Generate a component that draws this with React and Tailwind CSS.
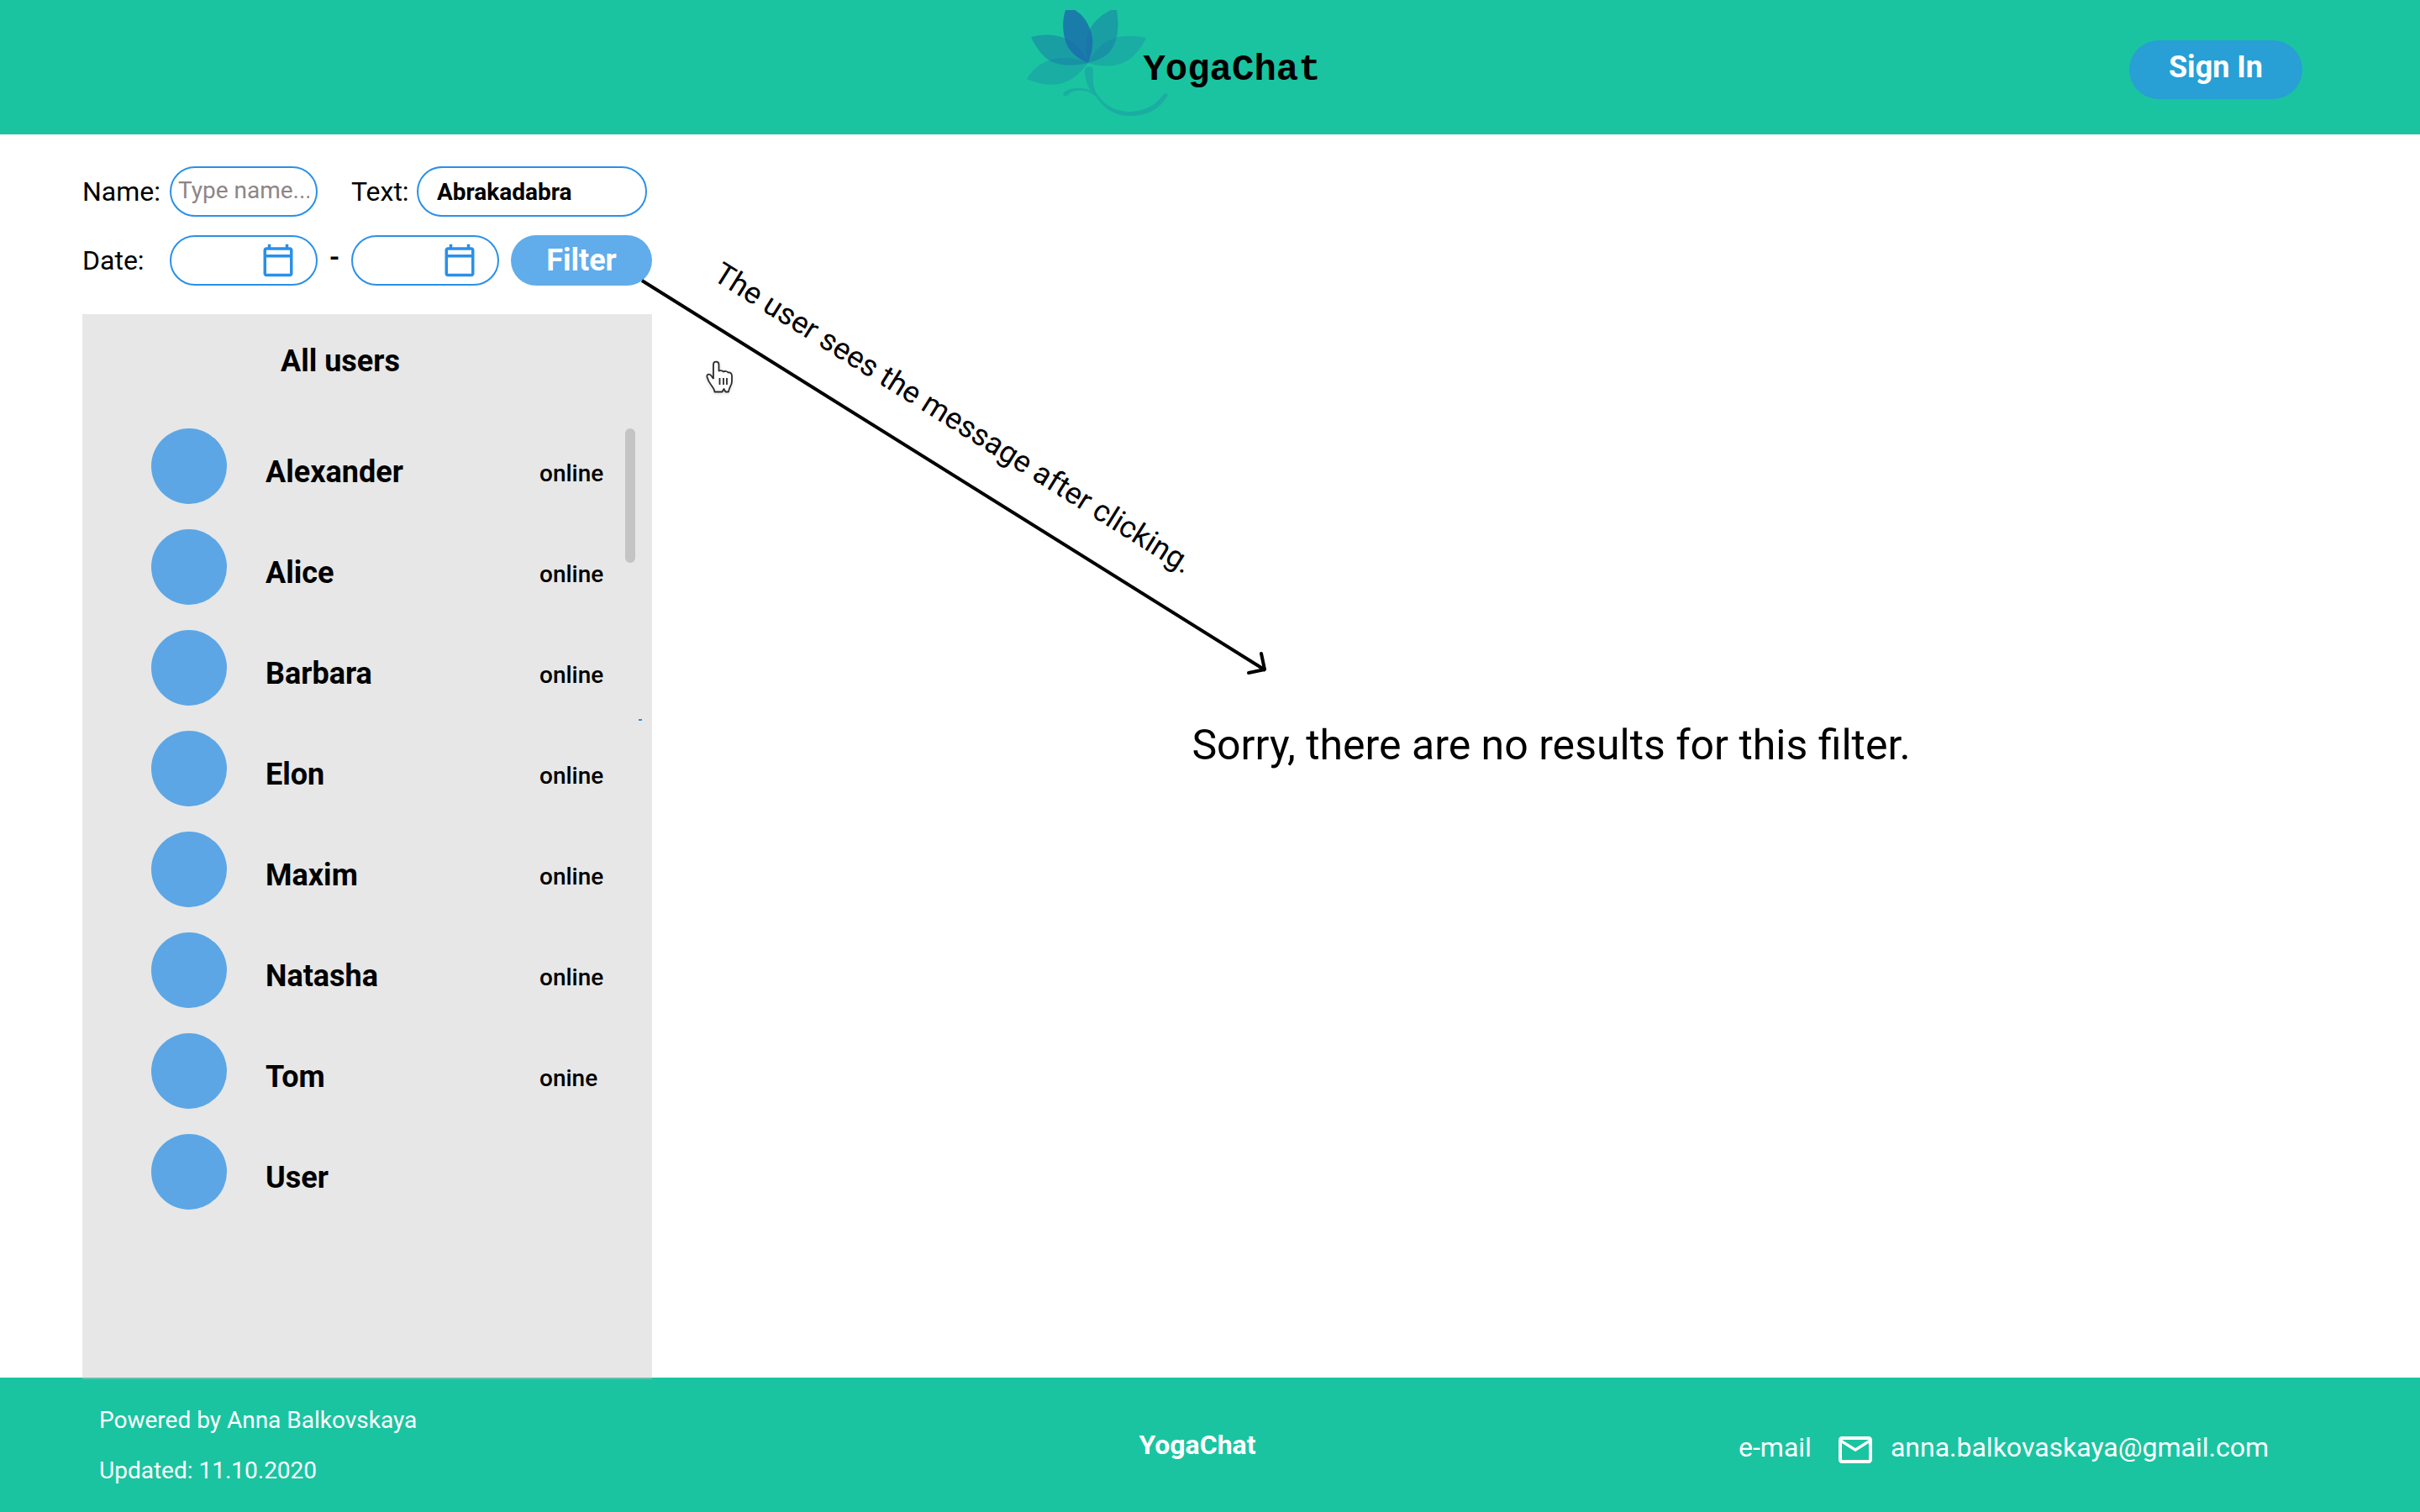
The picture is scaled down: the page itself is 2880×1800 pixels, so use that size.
const users = [
  { name: "Alexander", status: "online" },
  { name: "Alice", status: "online" },
  { name: "Barbara", status: "online" },
  { name: "Elon", status: "online" },
  { name: "Maxim", status: "online" },
  { name: "Natasha", status: "online" },
  { name: "Tom", status: "onine" },
  { name: "User", status: "" },
];

function LotusLogo() {
  return (
    <svg width="170" height="142" viewBox="0 0 170 142" aria-hidden="true">
      <g fill="#1878a8">
        <path fillOpacity="0.3" d="M73 63C50 53 17 53 0 82C14 88 26 90 38 88C54 85 64 74 73 63Z" />
        <path fillOpacity="0.3" d="M73 63C84 40 105 25 142 33C133 52 119 64 103 66C92 67 82 66 73 63Z" />
        <path fillOpacity="0.5" d="M73 63C66 44 45 22 5 32C12 47 21 58 31 62C44 67 60 66 73 63Z" />
        <path fillOpacity="0.5" d="M73 63C66 36 72 14 100 0H107C111 24 107 44 94 54C87 59 80 60 73 63Z" />
      </g>
      <path fill="#1a6cab" fillOpacity="0.8" d="M73 63C78 50 81 36 75 22C71 12 66 5 57 0H46C41 15 43 32 49 44C55 53 63 59 73 63Z" />
      <path
        fill="#1a8fa8"
        fillOpacity="0.42"
        d="M69 71C71 66 78 66 79 71C78 88 80 96 85 102C94 115 108 121 123 121C143 120 154 112 163 100C165 97 169 100 167 103C158 117 145 126 123 126C103 126 90 115 83 104C76 96 66 95 58 96C54 97 52 98 48 102C45 104 41 100 45 97C51 93 58 92 64 93C69 93 73 94 76 96C71 88 69 80 69 71Z"
      />
    </svg>
  );
}

function CalendarIcon() {
  return (
    <svg className="size-[42px] shrink-0" viewBox="0 0 24 24" fill="#2a90e8" aria-hidden="true">
      <path d="M20 3h-1V1h-2v2H7V1H5v2H4c-1.1 0-2 .9-2 2v16c0 1.1.9 2 2 2h16c1.1 0 2-.9 2-2V5c0-1.1-.9-2-2-2zm0 18H4V10h16v11zm0-13H4V5h16v3z" />
    </svg>
  );
}

function MailIcon() {
  return (
    <svg className="size-12 shrink-0" viewBox="0 0 24 24" fill="white" aria-hidden="true">
      <path d="M20 4H4c-1.1 0-1.99.9-1.99 2L2 18c0 1.1.9 2 2 2h16c1.1 0 2-.9 2-2V6c0-1.1-.9-2-2-2zm0 14H4V8l8 5 8-5v10zm-8-7L4 6h16l-8 5z" />
    </svg>
  );
}

function HandCursor() {
  return (
    <svg className="absolute left-[830px] top-[260px] drop-shadow-sm" width="50" height="60" viewBox="0 0 50 60" aria-hidden="true">
      <path
        d="M19 31V14C19 9.500 25.500 9.500 25.500 14V21.500C28 20.500 30 21.500 31 22.500C33 21.500 35.500 22 36.500 23.500C39.500 23 41 25 41 27.500V34C41 39 37.500 41 37 46.500H33.500L31.500 43L29.500 46.500H20.500C20.500 41 14 38.500 11.500 29C10.500 25 15 24.500 17 28L19 31"
        fill="white"
        stroke="#2b2b2b"
        strokeWidth="1.800"
        strokeLinejoin="round"
      />
      <path d="M26.500 30V38M31 30V38M35 30V38" stroke="#2b2b2b" strokeWidth="1.800" />
    </svg>
  );
}

function DateField({ label }) {
  return (
    <div className="flex h-[60px] w-44 items-center rounded-full border-2 border-[#2a90e8] bg-white pl-5 pr-6">
      <input type="text" aria-label={label} className="min-w-0 flex-1 bg-transparent text-[28px] outline-none" />
      <CalendarIcon />
    </div>
  );
}

function Filters() {
  return (
    <form className="flex flex-col gap-[22px] text-[32px]" onSubmit={(e) => e.preventDefault()}>
      <div className="flex items-center">
        <label htmlFor="name" className="w-[104px]">Name:</label>
        <input
          id="name"
          type="text"
          placeholder="Type name..."
          className="h-[60px] w-44 rounded-full border-2 border-[#2a90e8] bg-white px-2 pb-1 text-[28px] outline-none placeholder:text-[#8f8585]"
        />
        <label htmlFor="text" className="ml-10 w-[78px]">Text:</label>
        <input
          id="text"
          type="text"
          defaultValue="Abrakadabra"
          className="h-[60px] w-[274px] rounded-full border-2 border-[#2a90e8] bg-white px-[22px] text-[28px] font-bold outline-none"
        />
      </div>
      <div className="flex items-center">
        <span className="w-[104px]">Date:</span>
        <DateField label="Date from" />
        <span className="w-10 pb-2 text-center font-bold">-</span>
        <DateField label="Date to" />
        <button type="submit" className="ml-auto h-[60px] w-[168px] rounded-full bg-[#61aceb] text-4xl font-bold text-white">
          Filter
        </button>
      </div>
    </form>
  );
}

function UserList() {
  return (
    <section className="relative -mb-[2px] mt-[34px] flex-1 bg-[#c4c4c4]/40 pl-[82px] pr-5">
      <h2 className="pl-[154px] pt-9 text-4xl font-bold">All users</h2>
      <div className="mt-[60px] flex justify-between">
        <ul className="flex flex-col gap-[30px]">
          {users.map((u) => (
            <li key={u.name} className="flex h-[90px] items-center">
              <span className="size-[90px] rounded-full bg-[#5ca6e5]" />
              <span className="ml-[46px] w-[326px] pt-3.5 text-4xl font-bold">{u.name}</span>
              <span className="pt-[18px] text-[28px] font-medium">{u.status}</span>
            </li>
          ))}
        </ul>
        <div className="h-40 w-3 rounded-full bg-[#c4c4c4]" />
      </div>
      <span className="absolute right-3 top-[482px] h-0.5 w-1 bg-[#2a90e8]" />
    </section>
  );
}

export default function App() {
  return (
    <div className="flex min-h-screen flex-col bg-white font-['Roboto',sans-serif] text-black">
      <header className="grid h-40 grid-cols-[1fr_auto_1fr] items-center bg-[#1ac4a1] pl-[54px] pr-[140px] pt-1.5">
        <a href="#" className="col-start-2 flex items-center">
          <LotusLogo />
          <span className="-ml-8 font-['Liberation_Mono',monospace] text-[44px] font-bold">YogaChat</span>
        </a>
        <button type="button" className="h-[70px] w-[206px] justify-self-end rounded-full bg-[#289fd5] pb-1.5 text-4xl font-bold text-white">
          Sign In
        </button>
      </header>

      <main className="relative flex flex-1 pl-[98px] pt-[38px]">
        <div className="z-10 flex w-[678px] shrink-0 flex-col">
          <Filters />
          <UserList />
        </div>
        <p className="flex-1 pl-9 pt-[652px] text-center text-[50px]">Sorry, there are no results for this filter.</p>

        <svg className="absolute left-[760px] top-[160px] z-10" width="760" height="500" viewBox="0 0 760 500" fill="none" stroke="black" strokeWidth="4" aria-hidden="true">
          <path d="M4 14L746 478" />
          <path d="M741 458L745 477L726 481" strokeLinecap="round" strokeLinejoin="round" />
        </svg>
        <p className="absolute left-[864px] top-[145px] origin-top-left rotate-[32deg] whitespace-nowrap text-4xl">
          The user sees the message after clicking.
        </p>
        <HandCursor />
      </main>

      <footer className="grid h-40 grid-cols-[1fr_auto_1fr] items-center bg-[#1ac4a1] pl-[118px] pr-[180px] text-white">
        <div className="pt-0.5 text-[28px] leading-[60px]">
          <p>Powered by Anna Balkovskaya</p>
          <p>Updated: 11.10.2020</p>
        </div>
        <p className="pl-8 text-[32px] font-bold">YogaChat</p>
        <div className="flex items-center justify-self-end pt-1.5 text-[32px]">
          <span>e-mail</span>
          <span className="ml-7 mr-[18px] pt-1.5"><MailIcon /></span>
          <a href="mailto:anna.balkovaskaya@gmail.com">anna.balkovaskaya@gmail.com</a>
        </div>
      </footer>
    </div>
  );
}
